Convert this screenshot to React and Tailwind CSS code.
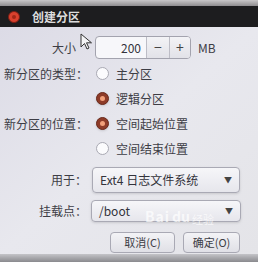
import React from 'react';

const FONT = { fontFamily: '"Noto Sans CJK SC", "Noto Sans", sans-serif' };

function Radio({ checked }) {
  return checked ? (
    <span className="w-[13px] h-[13px] rounded-full bg-[#8e3b28] border border-[#6a2a1c] flex items-center justify-center shadow-sm">
      <span className="w-[5px] h-[5px] rounded-full bg-[#f2a07a]" />
    </span>
  ) : (
    <span className="w-[13px] h-[13px] rounded-full bg-[#fbfbfd] border border-[#a9a9b3]" />
  );
}

function RadioRow({ label, checked, text }) {
  return (
    <div className="flex items-center h-[25px]">
      <div className="w-[89px] text-right pr-[1px] text-[12px] text-[#3d3d45]">{label}</div>
      <div className="flex items-center gap-[7px] pl-[7px]">
        <Radio checked={checked} />
        <span className="text-[12px] text-[#3d3d45]">{text}</span>
      </div>
    </div>
  );
}

function Combo({ text, className }) {
  return (
    <div className={`flex items-center justify-between px-[7px] rounded-[4px] border border-[#a9a9b4] bg-gradient-to-b from-[#f6f6f9] to-[#e6e6ec] shadow-sm ${className}`}>
      <span className="text-[12px] text-[#33333b]">{text}</span>
      <span className="text-[8px] text-[#444]">▼</span>
    </div>
  );
}

export default function App() {
  return (
    <div className="relative w-[258px] h-[262px] overflow-hidden bg-[#e2e2e8]" style={FONT}>
      <div className="h-[6px] bg-gradient-to-b from-[#c9c7c9] to-[#8f8d90]" />
      <div className="h-[21px] bg-[#1d1d1f] flex items-center pl-[8px]">
        <span className="w-[12px] h-[12px] rounded-full bg-[#d9412e] border border-[#7a1e14] flex items-center justify-center">
          <span className="w-[4px] h-[4px] rounded-full bg-[#a22717]" />
        </span>
        <span className="ml-[12px] text-[12px] font-bold text-[#dcdcdc]">创建分区</span>
      </div>

      <div className="bg-gradient-to-br from-[#dcdbe6] via-[#e8e8ee] to-[#e4e4e8] h-[227px] pt-[9px]">
        <div className="flex items-center h-[23px]">
          <div className="w-[76px] text-right text-[12px] text-[#3d3d45]">大小</div>
          <div className="ml-[19px] flex h-[23px] w-[96px] rounded-[4px] border border-[#a3a3ae] bg-[#f7f7fa] overflow-hidden">
            <div className="w-[50px] flex items-center justify-end pr-[5px] text-[12px] text-[#33333b]">200</div>
            <div className="w-[23px] flex items-center justify-center border-l border-[#bdbdc6] text-[14px] text-[#444] bg-gradient-to-b from-[#f3f3f6] to-[#e2e2e8]">−</div>
            <div className="flex-1 flex items-center justify-center border-l border-[#bdbdc6] text-[14px] text-[#444] bg-gradient-to-b from-[#f3f3f6] to-[#e2e2e8]">+</div>
          </div>
          <span className="ml-[7px] text-[12px] text-[#3d3d45]">MB</span>
        </div>

        <div className="mt-[2px]">
          <RadioRow label="新分区的类型：" text="主分区" />
          <RadioRow label="" checked text="逻辑分区" />
          <RadioRow label="新分区的位置：" checked text="空间起始位置" />
          <RadioRow label="" text="空间结束位置" />
        </div>

        <div className="flex items-center mt-[6px]">
          <div className="w-[87px] text-right text-[12px] text-[#3d3d45]">用于：</div>
          <Combo text="Ext4 日志文件系统" className="ml-[5px] w-[148px] h-[26px]" />
        </div>

        <div className="flex items-center mt-[7px]">
          <div className="w-[87px] text-right text-[12px] text-[#3d3d45]">挂载点：</div>
          <Combo text="/boot" className="ml-[4px] w-[150px] h-[22px]" />
        </div>

        <div className="flex mt-[10px] pl-[110px] gap-[8px]">
          <div className="w-[65px] h-[21px] rounded-[4px] border border-[#a9a9b4] bg-gradient-to-b from-[#f3f3f6] to-[#e0e0e6] flex items-center justify-center text-[11px] text-[#3d3d45]">取消(C)</div>
          <div className="w-[57px] h-[21px] rounded-[4px] border border-[#a9a9b4] bg-gradient-to-b from-[#f3f3f6] to-[#e0e0e6] flex items-center justify-center text-[11px] text-[#3d3d45]">确定(O)</div>
        </div>
      </div>
      <div className="h-[8px] bg-gradient-to-b from-[#c4c4c8] to-[#8a8a8e]" />

      {/* mouse cursor */}
      <svg className="absolute left-[80px] top-[33px]" width="14" height="18" viewBox="0 0 14 18">
        <path d="M1 1 L1 14 L4.5 10.5 L7 16 L9 15 L6.5 9.8 L11.5 9.8 Z" fill="#f4f4f6" stroke="#333" strokeWidth="1" strokeLinejoin="round" />
      </svg>

      {/* watermark */}
      <div className="absolute left-[145px] top-[206px] flex items-end gap-[2px] text-white opacity-70 pointer-events-none">
        <span className="text-[14px] font-bold tracking-[1px]">Bai</span>
        <span className="text-[14px] font-bold">du</span>
        <span className="text-[11px]">经验</span>
      </div>
    </div>
  );
}
